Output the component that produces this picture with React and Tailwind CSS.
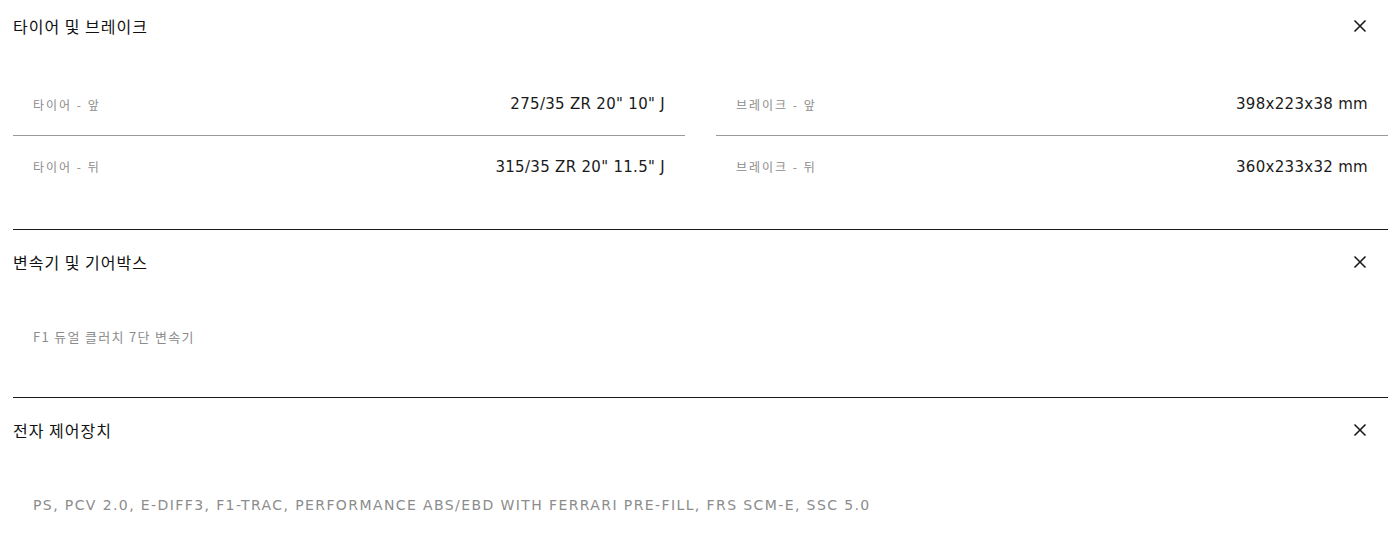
import React from "react";

const specRows = [
  [
    { label: "타이어 - 앞", value: "275/35 ZR 20\" 10\" J" },
    { label: "타이어 - 뒤", value: "315/35 ZR 20\" 11.5\" J" },
  ],
  [
    { label: "브레이크 - 앞", value: "398x223x38 mm" },
    { label: "브레이크 - 뒤", value: "360x233x32 mm" },
  ],
];

function CloseIcon() {
  return (
    <svg width="14" height="14" viewBox="0 0 14 14" fill="none" className="text-[#1a1a1a]">
      <path d="M1.5 1.5L12.5 12.5M12.5 1.5L1.5 12.5" stroke="currentColor" strokeWidth="1.6" />
    </svg>
  );
}

function Header({ title, tall }) {
  return (
    <div className={`flex items-center justify-between pr-[21px] ${tall ? "h-[64px]" : "h-[52px]"}`}>
      <span className="text-[16px] tracking-[1px] text-[#111]">{title}</span>
      <CloseIcon />
    </div>
  );
}

function SpecCol({ items }) {
  return (
    <div className="flex flex-col">
      {items.map((it, i) => (
        <div
          key={i}
          className={`flex h-[62px] items-center justify-between px-5 ${i === 0 ? "border-b border-[#9a9a9a]" : ""}`}
        >
          <span className="text-[12px] tracking-[2px] text-[#8c8c8c]">{it.label}</span>
          <span className="text-[15px] text-[#1a1a1a] font-['DejaVu_Sans',sans-serif] tracking-[0.3px]">{it.value}</span>
        </div>
      ))}
    </div>
  );
}

function Note({ children, upper }) {
  return (
    <div className="flex h-[103px] items-start px-5 pt-[33px]">
      <span
        className={
          upper
            ? "text-[14px] tracking-[1.4px] text-[#8c8c8c] font-['DejaVu_Sans',sans-serif]"
            : "text-[13px] tracking-[1.3px] text-[#8c8c8c]"
        }
      >
        {children}
      </span>
    </div>
  );
}

export default function App() {
  return (
    <div className="w-[1397px] h-[537px] overflow-hidden bg-white pl-[13px] pr-[9px] font-['Noto_Sans_CJK_KR','Noto_Sans',sans-serif]">
      <section className="border-b border-[#1a1a1a] pb-[31px]">
        <Header title="타이어 및 브레이크" />
        <div className="mt-[22px] grid grid-cols-2 gap-[31px]">
          {specRows.map((col, i) => (
            <SpecCol key={i} items={col} />
          ))}
        </div>
      </section>
      <section className="border-b border-[#1a1a1a]">
        <Header title="변속기 및 기어박스" tall />
        <Note>F1 듀얼 클러치 7단 변속기</Note>
      </section>
      <section>
        <Header title="전자 제어장치" tall />
        <Note upper>PS, PCV 2.0, E-DIFF3, F1-TRAC, PERFORMANCE ABS/EBD WITH FERRARI PRE-FILL, FRS SCM-E, SSC 5.0</Note>
      </section>
    </div>
  );
}
